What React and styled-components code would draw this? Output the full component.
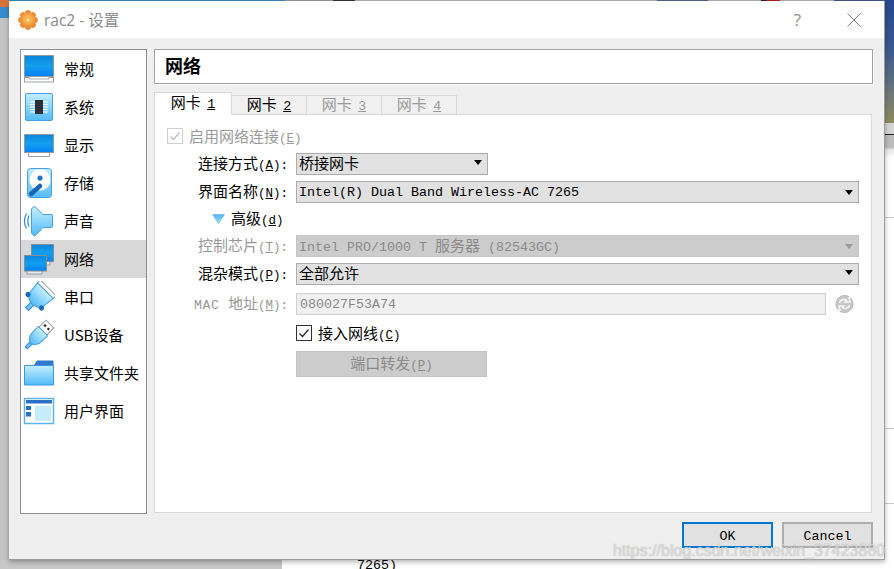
import React from 'react';
import styled, { createGlobalStyle } from 'styled-components';

const HAN = `"Noto Sans CJK SC", "Noto Sans", sans-serif`;
const MONO = `"Liberation Mono", "Noto Sans CJK SC", monospace`;

const GlobalStyle = createGlobalStyle`
  html, body {
    margin: 0;
    padding: 0;
    width: 894px;
    height: 569px;
    overflow: hidden;
    background: #fff;
  }
  * { box-sizing: border-box; }
`;

const Desktop = styled.div`
  position: relative;
  width: 894px;
  height: 569px;
  overflow: hidden;
  background: #fff;
  font-family: ${HAN};
  color: #000;
`;

const TopEdge = styled.div`
  position: absolute;
  left: 0;
  top: 0;
  width: 894px;
  height: 1px;
  background: linear-gradient(90deg,
    #d8703a 0 9px, #3a8ab8 9px 285px, #9a9a9a 285px 333px, #333 333px 355px,
    #b0b0b0 355px 657px, #50648c 657px 708px, #b0b0b0 708px 761px, #222 761px 766px,
    #b02020 766px 780px, #b0b0b0 780px 834px, #40588c 834px 894px);
`;

const LeftEdge = styled.div`
  position: absolute;
  left: 0;
  top: 0;
  width: 9px;
  height: 569px;
  background: linear-gradient(180deg, #d8703a 0 7px, #3a8ad0 7px 18px, #c4c4c4 18px 569px);
`;

const BottomEdge = styled.div`
  position: absolute;
  left: 0;
  top: 560px;
  width: 282px;
  height: 9px;
  background: #c8c8c8;
`;

const RightEdge = styled.div`
  position: absolute;
  left: 885px;
  top: 0;
  width: 9px;
  height: 569px;
  background:
    linear-gradient(180deg,
      transparent 0 217px, #c8c8c8 217px 218px, transparent 218px 428px,
      #c8c8c8 428px 429px, transparent 429px 503px, #c8c8c8 503px 504px, transparent 504px),
    linear-gradient(180deg,
      #26478e 0, #3c5a8e 50px, #6f7a78 95px, #8f8b5e 123px,
      #d4d4d4 123px 134px, #222 134px 135px, #bdbdbd 135px 147px, #e8e8e8 150px, #fff 158px);
`;

const BehindText = styled.div`
  position: absolute;
  left: 357px;
  top: 559px;
  font: 13.33px/14px ${MONO};
  color: #000;
`;

const Dialog = styled.div`
  position: absolute;
  left: 9px;
  top: 1px;
  width: 876px;
  height: 559px;
  display: flex;
  flex-direction: column;
  background: #efefef;
  border-right: 1px solid #9c9c9c;
  border-bottom: 1px solid #9c9c9c;
  box-shadow: 0 2px 5px rgba(0, 0, 0, 0.3);
`;

const TitleBar = styled.div`
  height: 37px;
  flex: none;
  display: flex;
  align-items: center;
  padding-left: 9px;
  background: #fff;
`;

const TitleText = styled.div`
  margin-left: 6px;
  font: 15.5px/20px "Open Sans", ${HAN};
  color: #8a8a8a;
`;

const TitleActions = styled.div`
  margin-left: auto;
  display: flex;
  align-items: center;
  gap: 46px;
  padding-right: 23px;
  color: #8c8c8c;
  font: 17px/20px "Open Sans", sans-serif;
`;

const Body = styled.div`
  flex: 1;
  min-height: 0;
  display: flex;
  flex-direction: column;
  padding: 11px 11px 0;
`;

const Columns = styled.div`
  height: 465px;
  display: flex;
  gap: 7px;
`;

const Sidebar = styled.div`
  width: 127px;
  flex: none;
  background: #fff;
  border: 1px solid #8b8f98;
`;

const NavItem = styled.div`
  height: 38px;
  display: flex;
  align-items: center;
  gap: 9px;
  padding-left: 2px;
  font-size: 15px;
  line-height: 20px;
  white-space: nowrap;
  background: ${(p) => (p.$active ? '#d8d8d8' : 'transparent')};
`;

const NavLabel = styled.span`
  padding-bottom: 1px;
`;

const Main = styled.div`
  flex: 1;
  min-width: 0;
  display: flex;
  flex-direction: column;
`;

const Header = styled.div`
  height: 35px;
  flex: none;
  display: flex;
  align-items: center;
  padding: 0 0 3px 10px;
  background: #fff;
  border: 1px solid #a2a2a2;
  box-shadow: 1px 1px 0 #fff;
  font-size: 18px;
  font-weight: 700;
`;

const Tabs = styled.div`
  height: 23px;
  margin-top: 8px;
  flex: none;
  display: flex;
  align-items: flex-end;
  position: relative;
  z-index: 1;
  margin-bottom: -1px;
`;

const Tab = styled.div`
  height: ${(p) => (p.$active ? '23px' : '20px')};
  width: ${(p) => (p.$active ? '78px' : '75px')};
  display: flex;
  align-items: center;
  justify-content: center;
  padding-bottom: ${(p) => (p.$active ? '4px' : '3px')};
  font-size: 15px;
  white-space: pre;
  background: ${(p) => (p.$active ? '#fff' : '#f0f0f0')};
  border: 1px solid #d9d9d9;
  border-left: ${(p) => (p.$active ? '1px solid #d9d9d9' : 'none')};
  border-bottom: ${(p) => (p.$active ? 'none' : '1px solid #d9d9d9')};
  color: ${(p) => (p.$disabled ? '#9a9a9a' : '#000')};
`;

const TabKey = styled.span`
  margin-left: 3px;
  font: 13.33px/16px ${MONO};
  text-decoration: underline;
`;

const Panel = styled.div`
  flex: 1;
  min-height: 0;
  margin-right: 1px;
  margin-bottom: 1px;
  padding: 13px 12px 0 0;
  background: #fff;
  border: 1px solid #d9d9d9;
`;

const CheckRow = styled.div`
  height: 16px;
  display: flex;
  align-items: center;
  gap: 6px;
  padding-left: ${(p) => p.$indent}px;
  margin-top: ${(p) => p.$top || 0}px;
  font-size: 15px;
  color: ${(p) => (p.$disabled ? '#9a9a9a' : '#000')};
`;

const CheckText = styled.span`
  padding-bottom: 1px;
  white-space: nowrap;
`;

const Box = styled.span`
  width: 16px;
  height: 16px;
  flex: none;
  display: flex;
  align-items: center;
  justify-content: center;
  background: #fff;
  border: 1px solid ${(p) => (p.$disabled ? '#cfcfcf' : '#333')};
  color: ${(p) => (p.$disabled ? '#bdbdbd' : '#222')};
`;

const Row = styled.div`
  height: ${(p) => p.$height || 22}px;
  margin-top: ${(p) => p.$top}px;
  display: flex;
  align-items: stretch;
`;

const Label = styled.div`
  width: 133px;
  flex: none;
  margin-right: 8px;
  padding-bottom: 3px;
  display: flex;
  align-items: center;
  justify-content: flex-end;
  font-size: 15px;
  white-space: nowrap;
  color: ${(p) => (p.$disabled ? '#989898' : '#000')};
`;

const Key = styled.span`
  font: 12.5px/16px ${MONO};
  u { text-underline-offset: 1px; }
`;

const LatinWord = styled.span`
  font: 13.33px/16px ${MONO};
  letter-spacing: 0.5px;
  white-space: pre;
`;

const Select = styled.div`
  width: ${(p) => (p.$width ? `${p.$width}px` : 'auto')};
  flex: ${(p) => (p.$width ? 'none' : '1')};
  display: flex;
  align-items: center;
  justify-content: space-between;
  padding: ${(p) => (p.$han ? '0 3px 3px 2px' : '1px 3px 0 2px')};
  font: 13.33px/18px ${MONO};
  white-space: pre;
  background: ${(p) => (p.$disabled ? '#cccccc' : '#e1e1e1')};
  border: 1px solid ${(p) => (p.$disabled ? '#c6c6c6' : '#adadad')};
  color: ${(p) => (p.$disabled ? '#8a8a8a' : '#000')};
`;

const Han = styled.span`
  font-family: ${HAN};
  font-size: 15px;
`;

const Caret = styled.span`
  width: 0;
  height: 0;
  margin-right: 2px;
  border-left: 4px solid transparent;
  border-right: 4px solid transparent;
  border-top: 5px solid ${(p) => (p.$disabled ? '#9a9a9a' : '#000')};
`;

const Advanced = styled.div`
  display: flex;
  align-items: center;
  gap: 6px;
  padding-left: 57px;
  font-size: 15px;
  margin-top: -1px;
`;

const AdvancedText = styled.span`
  padding-bottom: 2px;
`;

const MacInput = styled.div`
  width: 530px;
  flex: none;
  display: flex;
  align-items: center;
  padding: 1px 0 0 3px;
  font: 13.33px/18px ${MONO};
  color: #8a8a8a;
  background: #f0f0f0;
  border: 1px solid #cfcfcf;
`;

const RefreshWrap = styled.div`
  margin-left: 9px;
  display: flex;
  align-items: center;
`;

const PortRow = styled.div`
  margin-top: 10px;
  padding-left: 141px;
`;

const PortButton = styled.div`
  width: 191px;
  height: 26px;
  display: flex;
  align-items: center;
  justify-content: center;
  padding-bottom: 3px;
  font-size: 15px;
  color: #8a8a8a;
  background: #cccccc;
  border: 1px solid #c2c2c2;
`;

const Footer = styled.div`
  margin-top: 8px;
  display: flex;
  justify-content: flex-end;
  gap: 9px;
`;

const Button = styled.div`
  width: 91px;
  height: 26px;
  display: flex;
  align-items: center;
  justify-content: center;
  padding-top: 3px;
  font: 13.33px/18px ${MONO};
  background: #e1e1e1;
  border: ${(p) => (p.$primary ? '2px solid #0078d7' : '2px solid #adadad')};
`;

const Watermark = styled.div`
  position: absolute;
  left: 613px;
  top: 541px;
  font: 16px/20px "Liberation Sans", sans-serif;
  white-space: nowrap;
  color: rgba(255, 255, 255, 0.62);
  text-shadow: 0 0 1px rgba(120, 120, 120, 0.75);
`;

const IconSvg = ({ children, size = 32 }) => (
  <svg width={size} height={size} viewBox="0 0 32 32" style={{ flex: 'none', display: 'block' }}>
    <defs>
      <linearGradient id="screen" x1="0" y1="0" x2="0" y2="1">
        <stop offset="0" stopColor="#0a84dc" />
        <stop offset="0.5" stopColor="#12a0ee" />
        <stop offset="1" stopColor="#0680f4" />
      </linearGradient>
      <linearGradient id="sky" x1="0" y1="0" x2="0" y2="1">
        <stop offset="0" stopColor="#c4efff" />
        <stop offset="1" stopColor="#52bbf6" />
      </linearGradient>
    </defs>
    {children}
  </svg>
);

const MonitorIcon = () => (
  <IconSvg>
    <rect x="1.5" y="24.5" width="29" height="4.5" fill="#fff" stroke="#9aa2a8" />
    <rect x="1.5" y="2.5" width="29" height="21" fill="url(#screen)" stroke="#8f9aa3" />
    <path d="M6 24v2h20v-2" fill="#fff" stroke="#a8aeb3" />
  </IconSvg>
);

const ChipIcon = () => (
  <IconSvg>
    <rect x="2.5" y="2.5" width="27" height="27" rx="1.5" fill="url(#sky)" stroke="#4a9de0" />
    <path d="M7 11h5M7 13.500h5M7 16h5M7 18.500h5M7 21h5M20 11h5M20 13.500h5M20 16h5M20 18.500h5M20 21h5" stroke="#fff" strokeWidth="1.200" />
    <rect x="12" y="9" width="8" height="14" fill="#2a3038" />
  </IconSvg>
);

const DisplayIcon = () => (
  <IconSvg>
    <path d="M5.5 23v4.500h21V23" fill="#fff" stroke="#9aa2a8" />
    <rect x="1.5" y="5.500" width="29" height="18" fill="url(#screen)" stroke="#8f9aa3" />
  </IconSvg>
);

const DiskIcon = () => (
  <IconSvg>
    <rect x="4.5" y="1.500" width="24" height="29" rx="3" fill="url(#sky)" stroke="#4a9de0" />
    <circle cx="17" cy="13" r="10.500" fill="#fff" />
    <circle cx="17" cy="11" r="2.600" fill="#1f78c8" />
    <path d="M8 27l9-8" stroke="#1668b4" strokeWidth="4.500" strokeLinecap="round" />
  </IconSvg>
);

const SpeakerIcon = () => (
  <IconSvg>
    <path d="M12 1.500l8 8h8a1.500 1.500 0 0 1 1.500 1.500v10a1.500 1.500 0 0 1-1.500 1.500h-8l-8 8.500c-2-1-3.500-1.500-3.500-4V5c0-2 1.500-3 3.500-3.500z" fill="url(#sky)" stroke="#4a9de0" />
    <path d="M6 10.500c-1.500 3.500-1.500 7.500 0 11" fill="none" stroke="#2f86d6" strokeWidth="1.200" />
    <path d="M3.500 8.500c-2.500 4.500-2.500 10.500 0 15" fill="none" stroke="#2f86d6" strokeWidth="1.200" />
  </IconSvg>
);

const NetworkIcon = () => (
  <IconSvg>
    <path d="M12 18v4h15v-4" fill="#e8eef2" stroke="#8f9aa3" />
    <rect x="8.500" y="1.500" width="22" height="17" fill="url(#screen)" stroke="#7f8e9a" />
    <path d="M4 27v4h15v-4" fill="#e8eef2" stroke="#8f9aa3" />
    <rect x="1.500" y="12.500" width="22" height="15.500" fill="url(#screen)" stroke="#7f8e9a" />
  </IconSvg>
);

const SerialIcon = () => (
  <IconSvg>
    <g transform="rotate(45 16 16)">
      <rect x="5" y="3" width="22" height="4" fill="#fff" stroke="#9aa2a8" />
      <rect x="14" y="24" width="4" height="9" fill="#6cc6f8" stroke="#2f86d6" />
      <path d="M5 7h22l-1.500 13c-1 3-5 6-9.500 6s-8.500-3-9.500-6z" fill="url(#sky)" stroke="#4a9de0" />
      <circle cx="6.500" cy="22" r="2.600" fill="#1668c4" />
      <circle cx="25.500" cy="22" r="2.600" fill="#1668c4" />
    </g>
  </IconSvg>
);

const UsbIcon = () => (
  <IconSvg>
    <g transform="rotate(45 16 16)">
      <rect x="10.500" y="0.500" width="11" height="10" fill="#fff" stroke="#8f9aa3" />
      <rect x="12.500" y="4" width="2.200" height="2.200" fill="#222" />
      <rect x="17.300" y="4" width="2.200" height="2.200" fill="#222" />
      <rect x="14.500" y="26" width="3" height="8" fill="#6cc6f8" stroke="#2f86d6" />
      <path d="M9.500 10.500h13v8c0 5-3 9-6.500 9s-6.500-4-6.500-9z" fill="url(#sky)" stroke="#4a9de0" />
    </g>
  </IconSvg>
);

const FolderIcon = () => (
  <IconSvg>
    <path d="M11 8l3-4.500h16.500V9z" fill="#2f78cc" />
    <path d="M1.500 8.500h29v19.500h-29z" fill="url(#sky)" stroke="#3f96de" />
  </IconSvg>
);

const WindowIcon = () => (
  <IconSvg>
    <rect x="1.500" y="3.500" width="29" height="25" fill="#fff" stroke="#5cb4ee" strokeWidth="1.500" />
    <rect x="3" y="5" width="26" height="3.500" fill="#2a70c4" />
    <rect x="3" y="11" width="5" height="4" fill="#2a70c4" />
    <rect x="3" y="17" width="5" height="4.500" fill="#2a70c4" />
    <rect x="12" y="11" width="16" height="15" fill="#c4ecfd" />
  </IconSvg>
);

const GearLogo = () => (
  <svg width="20" height="20" viewBox="0 0 20 20" style={{ flex: 'none', display: 'block' }}>
    <defs>
      <radialGradient id="gear" cx="0.5" cy="0.45" r="0.6">
        <stop offset="0" stopColor="#ffd060" />
        <stop offset="1" stopColor="#ea8030" />
      </radialGradient>
    </defs>
    <g fill="#ee8a34">
      {[0, 45, 90, 135, 180, 225, 270, 315].map((a) => (
        <circle key={a} cx="10" cy="3" r="2.900" transform={`rotate(${a} 10 10)`} />
      ))}
    </g>
    <circle cx="10" cy="10" r="7.600" fill="url(#gear)" />
    <circle cx="10" cy="10" r="2.300" fill="#ffe09a" stroke="#e08a3a" strokeWidth="0.600" />
  </svg>
);

const CloseGlyph = () => (
  <svg width="14" height="14" viewBox="0 0 14 14" style={{ display: 'block' }}>
    <path d="M0.500 0.500l13 13M13.500 0.500l-13 13" stroke="#808080" strokeWidth="1" />
  </svg>
);

const Tick = () => (
  <svg width="12" height="12" viewBox="0 0 12 12" style={{ display: 'block' }}>
    <path d="M1.500 6.500l3 3 6-7" fill="none" stroke="currentColor" strokeWidth="1.200" />
  </svg>
);

const Triangle = () => (
  <svg width="13" height="10" viewBox="0 0 13 10" style={{ display: 'block' }}>
    <defs>
      <linearGradient id="tri" x1="0" y1="0" x2="0" y2="1">
        <stop offset="0" stopColor="#4fb4f0" />
        <stop offset="1" stopColor="#a4e2fc" />
      </linearGradient>
    </defs>
    <path d="M0.500 0.500h12l-6 9z" fill="url(#tri)" stroke="#58b4ec" strokeWidth="0.600" />
  </svg>
);

const Refresh = () => (
  <svg width="19" height="20" viewBox="0 0 19 20" style={{ display: 'block' }}>
    <circle cx="9.500" cy="10" r="8.500" fill="#c8c8c8" stroke="#b4b4b4" />
    <path d="M4.500 9c.8-2.500 3-3.800 5.500-3.300l1.500.6-1.400 1.600h5L14.500 3.500l-1.300 1.500" fill="none" stroke="#f4f4f4" strokeWidth="1.500" />
    <path d="M14.500 11c-.8 2.500-3 3.800-5.500 3.300l-1.500-.6 1.400-1.600h-5l.6 4.400 1.300-1.500" fill="none" stroke="#f4f4f4" strokeWidth="1.500" />
  </svg>
);

const navItems = [
  { icon: MonitorIcon, label: '常规' },
  { icon: ChipIcon, label: '系统' },
  { icon: DisplayIcon, label: '显示' },
  { icon: DiskIcon, label: '存储' },
  { icon: SpeakerIcon, label: '声音' },
  { icon: NetworkIcon, label: '网络', active: true },
  { icon: SerialIcon, label: '串口' },
  { icon: UsbIcon, label: 'USB设备' },
  { icon: FolderIcon, label: '共享文件夹' },
  { icon: WindowIcon, label: '用户界面' },
];

const tabs = [
  { key: '1', active: true },
  { key: '2' },
  { key: '3', disabled: true },
  { key: '4', disabled: true },
];

const Mnemonic = ({ k, colon = true }) => (
  <Key>(<u>{k}</u>){colon ? ':' : ''}</Key>
);

export default function App() {
  return (
    <Desktop>
      <GlobalStyle />
      <TopEdge />
      <LeftEdge />
      <BottomEdge />
      <RightEdge />
      <BehindText>7265)</BehindText>
      <Dialog>
        <TitleBar>
          <GearLogo />
          <TitleText>rac2 - 设置</TitleText>
          <TitleActions>
            <span>?</span>
            <CloseGlyph />
          </TitleActions>
        </TitleBar>
        <Body>
          <Columns>
            <Sidebar>
              {navItems.map((item) => (
                <NavItem key={item.label} $active={item.active}>
                  <item.icon />
                  <NavLabel>{item.label}</NavLabel>
                </NavItem>
              ))}
            </Sidebar>
            <Main>
              <Header>网络</Header>
              <Tabs>
                {tabs.map((tab) => (
                  <Tab key={tab.key} $active={tab.active} $disabled={tab.disabled}>
                    <span>网卡 <TabKey>{tab.key}</TabKey></span>
                  </Tab>
                ))}
              </Tabs>
              <Panel>
                <CheckRow $indent={12} $disabled>
                  <Box $disabled><Tick /></Box>
                  <CheckText>启用网络连接<Mnemonic k="E" colon={false} /></CheckText>
                </CheckRow>
                <Row $top={9}>
                  <Label><span>连接方式<Mnemonic k="A" /></span></Label>
                  <Select $width={192} $han><Han>桥接网卡</Han><Caret /></Select>
                </Row>
                <Row $top={6}>
                  <Label><span>界面名称<Mnemonic k="N" /></span></Label>
                  <Select>Intel(R) Dual Band Wireless-AC 7265<Caret /></Select>
                </Row>
                <Row $top={6} $height={20}>
                  <Advanced><Triangle /><AdvancedText>高级<Mnemonic k="d" colon={false} /></AdvancedText></Advanced>
                </Row>
                <Row $top={6}>
                  <Label $disabled><span>控制芯片<Mnemonic k="T" /></span></Label>
                  <Select $disabled>
                    <span>Intel PRO/1000 T <Han>服务器</Han> (82543GC)</span>
                    <Caret $disabled />
                  </Select>
                </Row>
                <Row $top={6}>
                  <Label><span>混杂模式<Mnemonic k="P" /></span></Label>
                  <Select $han><Han>全部允许</Han><Caret /></Select>
                </Row>
                <Row $top={8}>
                  <Label $disabled><span><LatinWord>MAC </LatinWord>地址<Mnemonic k="M" /></span></Label>
                  <MacInput>080027F53A74</MacInput>
                  <RefreshWrap><Refresh /></RefreshWrap>
                </Row>
                <CheckRow $indent={141} $top={10}>
                  <Box><Tick /></Box>
                  <CheckText>接入网线<Mnemonic k="C" colon={false} /></CheckText>
                </CheckRow>
                <PortRow>
                  <PortButton><span>端口转发<Mnemonic k="P" colon={false} /></span></PortButton>
                </PortRow>
              </Panel>
            </Main>
          </Columns>
          <Footer>
            <Button $primary>OK</Button>
            <Button>Cancel</Button>
          </Footer>
        </Body>
      </Dialog>
      <Watermark>https://blog.csdn.net/weixin_37423880</Watermark>
    </Desktop>
  );
}
